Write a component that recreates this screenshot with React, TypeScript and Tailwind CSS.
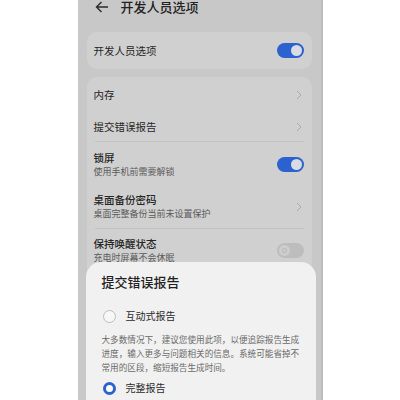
import React from "react";

const font = { fontFamily: '"Noto Sans CJK SC", "Noto Sans", sans-serif' };

function Toggle({ on }: { on: boolean }) {
  if (on) {
    return (
      <div className="flex h-[15px] w-[27px] items-center justify-end rounded-full bg-[#2c62cf] pr-[2px]">
        <div className="h-[11px] w-[11px] rounded-full bg-[#d9dce3]" />
      </div>
    );
  }
  return (
    <div className="flex h-[15px] w-[27px] items-center rounded-full bg-[#bdbdbd] pl-[2px]">
      <div className="flex h-[11px] w-[11px] items-center justify-center rounded-full bg-[#cdcdcd]">
        <div className="h-[5px] w-[5px] rounded-full border border-[#b8b8b8]" />
      </div>
    </div>
  );
}

function Chevron() {
  return (
    <svg width="6" height="10" viewBox="0 0 6 10" className="mr-[2px]">
      <path d="M1 1l4 4-4 4" fill="none" stroke="#a9a9a9" strokeWidth="1" />
    </svg>
  );
}

function Divider() {
  return <div className="mx-[8px] h-px bg-[#c3c3c3]" />;
}

export default function App() {
  return (
    <div className="flex h-[400px] w-[400px] justify-center bg-white" style={font}>
      <div className="relative h-[400px] w-[245px] overflow-hidden border-r-[2px] border-[#bdbdbd] bg-[#c8c8c8]">
        {/* header */}
        <div className="mt-[-4px] flex h-[21px] items-center pl-[17px]">
          <svg width="14" height="12" viewBox="0 0 14 12">
            <path d="M13 6H1.5M6.5 1L1.5 6l5 5" fill="none" stroke="#2a2a2a" strokeWidth="1.4" />
          </svg>
          <span className="ml-[12px] text-[13px] leading-[16px] font-medium text-[#222]">开发人员选项</span>
        </div>

        {/* card 1 */}
        <div className="mx-[9px] mt-[15px] flex h-[37px] items-center justify-between rounded-[10px] bg-[#d0d0d0] pl-[7px] pr-[8px]">
          <span className="text-[10.5px] leading-[14px] text-[#262626]">开发人员选项</span>
          <Toggle on />
        </div>

        {/* card 2 */}
        <div className="mx-[9px] mt-[8px] rounded-[10px] bg-[#d0d0d0] pb-[40px]">
          <div className="flex h-[35px] items-center justify-between pl-[7px] pr-[8px]">
            <span className="text-[10.5px] leading-[14px] text-[#262626]">内存</span>
            <Chevron />
          </div>
          <div className="flex h-[29px] items-center justify-between pl-[7px] pr-[8px]">
            <span className="text-[10.5px] leading-[14px] text-[#262626]">提交错误报告</span>
            <Chevron />
          </div>
          <Divider />
          <div className="flex h-[44px] items-center justify-between pl-[7px] pr-[8px]">
            <div className="flex flex-col pt-[1px]">
              <span className="text-[10.5px] leading-[14px] font-medium text-[#262626]">锁屏</span>
              <span className="text-[9px] leading-[14px] text-[#5a5a5a]">使用手机前需要解锁</span>
            </div>
            <Toggle on />
          </div>
          <div className="flex h-[42px] items-center justify-between pl-[7px] pr-[8px]">
            <div className="flex flex-col">
              <span className="text-[10.5px] leading-[14px] font-medium text-[#262626]">桌面备份密码</span>
              <span className="text-[9px] leading-[14px] text-[#5a5a5a]">桌面完整备份当前未设置保护</span>
            </div>
            <Chevron />
          </div>
          <Divider />
          <div className="flex h-[43px] items-center justify-between pl-[7px] pr-[8px]">
            <div className="flex flex-col">
              <span className="text-[10.5px] leading-[14px] font-medium text-[#262626]">保持唤醒状态</span>
              <span className="text-[9px] leading-[13px] text-[#5a5a5a]">充电时屏幕不会休眠</span>
            </div>
            <Toggle on={false} />
          </div>
        </div>

        {/* bottom sheet */}
        <div className="absolute left-[8px] top-[262px] h-[150px] w-[230px] rounded-t-[15px] bg-[#f1f1f1] px-[16px] pt-[12px]">
          <div className="text-[13px] leading-[16px] font-medium text-[#1f1f1f]">提交错误报告</div>
          <div className="mt-[19px] flex items-center">
            <div className="ml-[1px] h-[13px] w-[13px] rounded-full border border-[#bdbdbd] bg-[#f7f7f7]" />
            <span className="ml-[10px] text-[10px] leading-[14px] text-[#2a2a2a]">互动式报告</span>
          </div>
          <div className="mt-[9px] whitespace-nowrap text-[8.6px] leading-[14px] text-[#6a6a6a]">
            大多数情况下，建议您使用此项，以便追踪报告生成
            <br />
            进度，输入更多与问题相关的信息。系统可能省掉不
            <br />
            常用的区段，缩短报告生成时间。
          </div>
          <div className="mt-[7px] flex items-center">
            <div className="ml-[1px] h-[13px] w-[13px] rounded-full border-[3.5px] border-[#2c62cf] bg-white" />
            <span className="ml-[10px] text-[10px] leading-[14px] text-[#2a2a2a]">完整报告</span>
          </div>
        </div>
      </div>
    </div>
  );
}
